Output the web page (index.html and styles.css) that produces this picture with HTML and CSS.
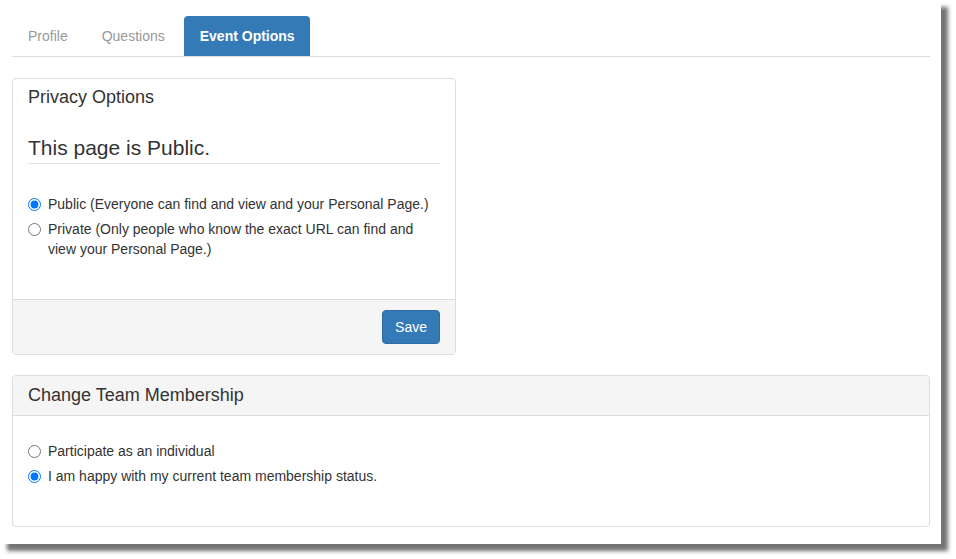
FILE: index.html
```html
<!DOCTYPE html>
<html>
<head>
<meta charset="utf-8">
<link rel="stylesheet" href="styles.css">
</head>
<body>
<div class="frame">
  <div class="container">
    <ul class="tabs">
      <li class="tab"><a>Profile</a></li>
      <li class="tab"><a>Questions</a></li>
      <li class="tab active"><a>Event Options</a></li>
    </ul>

    <div class="panel panel-privacy">
      <div class="panel-heading plain">Privacy Options</div>
      <div class="panel-body">
        <h3 class="page-state">This page is Public.</h3>
        <div class="radios">
          <label class="radio"><input type="radio" name="privacy" checked><span>Public (Everyone can find and view and your Personal Page.)</span></label>
          <label class="radio"><input type="radio" name="privacy"><span>Private (Only people who know the exact URL can find and view your Personal Page.)</span></label>
        </div>
      </div>
      <div class="panel-footer">
        <button class="btn">Save</button>
      </div>
    </div>

    <div class="panel panel-team">
      <div class="panel-heading shaded">Change Team Membership</div>
      <div class="panel-body">
        <div class="radios">
          <label class="radio"><input type="radio" name="team"><span>Participate as an individual</span></label>
          <label class="radio"><input type="radio" name="team" checked><span>I am happy with my current team membership status.</span></label>
        </div>
      </div>
    </div>
  </div>
</div>
</body>
</html>
```

FILE: styles.css
```css
html, body {
  margin: 0;
  padding: 0;
  background: #fff;
}

body {
  height: 559px;
  overflow: hidden;
  font-family: "Liberation Sans", Arial, sans-serif;
  font-size: 14px;
  line-height: 20px;
  color: #333;
}

.frame {
  width: 941px;
  height: 544px;
  background: #fff;
  box-shadow: 7px 7px 4px rgba(0, 0, 0, 0.55);
  overflow: hidden;
}

.container {
  width: 918px;
  padding: 16px 0 0 12px;
}

.tabs {
  list-style: none;
  margin: 0;
  padding: 0;
  display: flex;
  border-bottom: 1px solid #ddd;
  height: 40px;
}

.tab {
  margin-right: 3px;
}

.tab a {
  display: block;
  padding: 10px 15px 10px 16px;
  color: #999;
  border-radius: 4px 4px 0 0;
}

.tab:nth-child(2) a {
  padding-right: 16px;
}

.tab.active a {
  background: #337ab7;
  color: #fff;
  font-weight: bold;
  padding: 10px 15px 10px 16px;
}

.panel {
  border: 1px solid #ddd;
  border-radius: 4px;
  background: #fff;
}

.panel-privacy {
  width: 442px;
  margin-top: 21px;
}

.panel-team {
  margin-top: 20px;
  width: 916px;
}

.panel-heading {
  font-size: 18px;
  line-height: 20px;
  padding: 0 15px;
  color: #333;
}

.panel-heading.plain {
  padding-top: 8px;
}

.panel-heading.shaded {
  background: #f5f5f5;
  border-bottom: 1px solid #ddd;
  border-radius: 3px 3px 0 0;
  padding-top: 9px;
  padding-bottom: 10px;
}

.panel-body {
  padding: 0 15px;
}

.page-state {
  margin: 0;
  padding: 29px 0 4px;
  font-size: 21px;
  line-height: 23px;
  font-weight: normal;
  border-bottom: 1px solid #e5e5e5;
}

.radios {
  display: flex;
  flex-direction: column;
  gap: 5px;
}

.panel-privacy .radios {
  padding: 30px 0 40px;
}

.panel-team .radios {
  padding: 25px 0 40px;
}

.radio {
  display: flex;
  align-items: flex-start;
}

.radio input {
  width: 13px;
  height: 13px;
  margin: 4px 7px 0 0;
  flex: none;
}

.panel-footer {
  background: #f5f5f5;
  border-top: 1px solid #ddd;
  border-radius: 0 0 3px 3px;
  padding: 10px 15px;
  display: flex;
  justify-content: flex-end;
}

.btn {
  font-family: "Liberation Sans", Arial, sans-serif;
  font-size: 14px;
  line-height: 20px;
  padding: 6px 12px;
  color: #fff;
  background: #337ab7;
  border: 1px solid #2e6da4;
  border-radius: 4px;
}
```
